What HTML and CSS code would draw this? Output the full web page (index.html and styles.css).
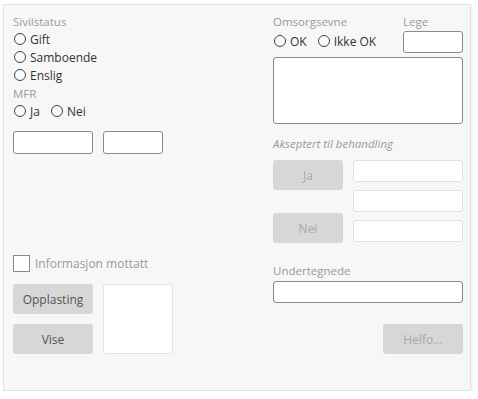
FILE: index.html
```html
<!DOCTYPE html>
<html lang="no">
<head>
    <meta charset="UTF-8">
    <title>Pasientinfo</title>
    <link rel="stylesheet" href="styles.css">
</head>
<body>
    <div class="panel">
        <div class="col left">
            <div class="label">Sivilstatus</div>
            <div class="radio-row"><span class="radio"></span>Gift</div>
            <div class="radio-row"><span class="radio"></span>Samboende</div>
            <div class="radio-row"><span class="radio"></span>Enslig</div>
            <div class="label mfr">MFR</div>
            <div class="radio-row">
                <span class="radio"></span>Ja
                <span class="radio gap"></span>Nei
            </div>
            <div class="input-pair">
                <div class="input wide"></div>
                <div class="input short"></div>
            </div>
            <div class="check-row"><span class="checkbox"></span>Informasjon mottatt</div>
            <div class="upload">
                <div class="btn-stack">
                    <button class="btn">Opplasting</button>
                    <button class="btn">Vise</button>
                </div>
                <div class="preview"></div>
            </div>
        </div>
        <div class="col right">
            <div class="top-row">
                <div>
                    <div class="label">Omsorgsevne</div>
                    <div class="radio-row ok"><span class="radio"></span>OK<span class="radio gap"></span>Ikke OK</div>
                </div>
                <div class="lege">
                    <div class="label">Lege</div>
                    <div class="input short lege-input"></div>
                </div>
            </div>
            <div class="input textarea"></div>
            <div class="label italic">Akseptert til behandling</div>
            <div class="accept">
                <div class="accept-btns">
                    <button class="btn off">Ja</button>
                    <button class="btn off">Nei</button>
                </div>
                <div class="accept-fields">
                    <div class="input light"></div>
                    <div class="input light"></div>
                    <div class="input light"></div>
                </div>
            </div>
            <div class="label sign">Undertegnede</div>
            <div class="input full"></div>
            <div class="helfo-row"><button class="btn off">Helfo...</button></div>
        </div>
    </div>
</body>
</html>
```

FILE: styles.css
```css
body {
    margin: 0;
    background: #ffffff;
    font-family: 'Open Sans', 'Noto Sans', sans-serif;
    font-size: 12px;
    color: #333;
}
.panel {
    margin: 4px 0 0 3px;
    width: 468px;
    height: 387px;
    background: #f7f7f7;
    border: 1px solid #e2e2e2;
    box-shadow: 1px 1px 2px rgba(0, 0, 0, 0.08);
    display: flex;
    padding-top: 9px;
    box-sizing: border-box;
}
.col {
    display: flex;
    flex-direction: column;
}
.left {
    width: 260px;
    padding-left: 9px;
}
.right {
    width: 190px;
}
.label {
    color: #9a9a9a;
    font-size: 11.5px;
    line-height: 16px;
}
.italic {
    font-style: italic;
    margin-top: 12px;
}
.mfr {
    margin-top: 2px;
}
.radio-row {
    display: flex;
    align-items: center;
    height: 18px;
}
.radio {
    width: 10px;
    height: 10px;
    border: 1px solid #444;
    border-radius: 50%;
    margin: 0 4px 0 1px;
    background: #fafafa;
}
.radio.gap {
    margin-left: 11px;
}
.input {
    background: #fff;
    border: 1px solid #8a8a8a;
    border-radius: 3px;
    box-sizing: border-box;
    height: 23px;
}
.input-pair {
    display: flex;
    gap: 10px;
    margin-top: 11px;
}
.wide {
    width: 80px;
}
.short {
    width: 60px;
}
.check-row {
    display: flex;
    align-items: center;
    margin-top: 100px;
    color: #9a9a9a;
    height: 18px;
}
.checkbox {
    width: 17px;
    height: 17px;
    box-sizing: border-box;
    border: 1px solid #8a8a8a;
    background: #fff;
    margin-right: 5px;
}
.upload {
    display: flex;
    gap: 10px;
    margin-top: 12px;
}
.btn-stack {
    display: flex;
    flex-direction: column;
    gap: 10px;
}
.btn {
    width: 80px;
    height: 30px;
    border: none;
    border-radius: 3px;
    background: #d7d7d7;
    color: #555;
    font-family: inherit;
    font-size: 12px;
    padding: 0;
}
.btn.off {
    color: #a8a8a8;
    width: 70px;
}
.preview {
    width: 70px;
    height: 70px;
    box-sizing: border-box;
    background: #fff;
    border: 1px solid #e2e2e2;
    border-radius: 3px;
}
.top-row {
    display: flex;
    justify-content: space-between;
}
.ok {
    margin-top: 2px;
}
.lege-input {
    margin-top: 1px;
    height: 22px;
}
.textarea {
    width: 190px;
    height: 67px;
    margin-top: 4px;
}
.accept {
    display: flex;
    gap: 10px;
    margin-top: 8px;
}
.accept-btns {
    display: flex;
    flex-direction: column;
    gap: 23px;
}
.accept-fields {
    display: flex;
    flex-direction: column;
    gap: 8px;
}
.light {
    width: 110px;
    height: 22px;
    border-color: #e0e0e0;
}
.sign {
    margin-top: 20px;
}
.full {
    width: 190px;
    height: 22px;
    margin-top: 2px;
}
.helfo-row {
    display: flex;
    justify-content: flex-end;
    margin-top: 21px;
}
.helfo-row .btn {
    width: 80px;
}
```
